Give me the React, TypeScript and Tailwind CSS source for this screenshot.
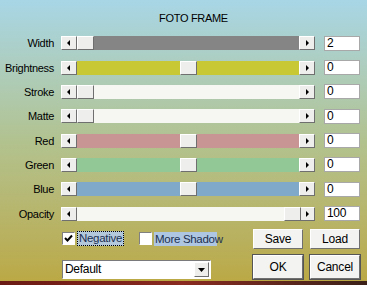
import React from 'react'

const sliders = [
  { label: 'Width', track: 'bg-[#858585]', thumb: 0, value: '2' },
  { label: 'Brightness', track: 'bg-[#c8c834]', thumb: 103, value: '0' },
  { label: 'Stroke', track: 'bg-[#f6f6f3]', thumb: 0, value: '0' },
  { label: 'Matte', track: 'bg-[#f6f6f3]', thumb: 0, value: '0' },
  { label: 'Red', track: 'bg-[#c89494]', thumb: 103, value: '0' },
  { label: 'Green', track: 'bg-[#92c896]', thumb: 103, value: '0' },
  { label: 'Blue', track: 'bg-[#80a8c8]', thumb: 103, value: '0' },
  { label: 'Opacity', track: 'bg-[#f6f6f3]', thumb: 207, value: '100' },
]

const raised = 'border border-t-white border-l-white border-b-[#6f6f6f] border-r-[#6f6f6f] bg-[#eeeeec]'
const sunken = 'border border-t-[#808080] border-l-[#808080] border-b-white border-r-white bg-white'

function Arrow({ dir }: { dir: 'left' | 'right' | 'down' }) {
  const pts = dir === 'left' ? '5,1 5,7 2,4' : dir === 'right' ? '3,1 3,7 6,4' : '1,3 8,3 4.5,7'
  return (
    <svg width="9" height="8" viewBox="0 0 9 8">
      <polygon points={pts} fill="#000" />
    </svg>
  )
}

function ScrollBar({ track, thumb }: { track: string; thumb: number }) {
  return (
    <div className="flex h-[14px] w-[254px]">
      <div className={`flex h-full w-[16px] items-center justify-center ${raised}`}>
        <Arrow dir="left" />
      </div>
      <div className={`relative h-full w-[222px] ${track}`}>
        <div className={`absolute top-0 h-full w-[17px] ${raised}`} style={{ left: thumb }} />
      </div>
      <div className={`flex h-full w-[16px] items-center justify-center ${raised}`}>
        <Arrow dir="right" />
      </div>
    </div>
  )
}

function Button({ label, tall }: { label: string; tall?: boolean }) {
  return (
    <div
      className={`flex items-center justify-center ${tall ? 'h-[24px] w-[50px] outline outline-1 outline-[#555]' : 'h-[20px] w-[50px]'} ${raised} bg-[#f3f3f1] text-[12px] tracking-[-0.2px] text-black`}
    >
      {label}
    </div>
  )
}

export default function App() {
  return (
    <main
      className="relative h-[285px] w-[367px] overflow-hidden bg-gradient-to-b from-[#a8d6e6] via-[#b2c28e] to-[#bba842] text-[11px] tracking-[-0.3px] text-black"
      style={{ fontFamily: '"Liberation Sans", Arial, sans-serif' }}
    >
      <div className="pt-[11px] pl-[159px] leading-[14px]">FOTO FRAME</div>

      <div className="mt-[6px] flex flex-col">
        {sliders.map(s => (
          <div key={s.label} className="flex h-[24.35px] items-center">
            <div className="w-[54px] whitespace-nowrap text-right leading-[14px]">{s.label}</div>
            <div className="ml-[7px]">
              <ScrollBar track={s.track} thumb={s.thumb} />
            </div>
            <div className="ml-[9px] flex h-[15px] w-[36px] items-center border border-[#a8a8a8] bg-white pl-[2px] text-[12px] leading-[13px]">
              {s.value}
            </div>
          </div>
        ))}
      </div>

      <div className="mt-[3px] flex items-start">
        <div className="ml-[62px] flex w-[149px] flex-col">
          <div className="flex h-[20px] items-center whitespace-nowrap text-[11.5px]">
            <div className={`flex h-[13px] w-[13px] shrink-0 items-center justify-center ${sunken}`}>
              <svg width="9" height="9" viewBox="0 0 9 9">
                <path d="M1 4 L3.5 6.5 L8 1.5" stroke="#000" strokeWidth="2" fill="none" />
              </svg>
            </div>
            <span className="ml-[2px] border border-dotted border-black bg-[#b4c8dc] px-[1px] leading-[13px] text-[#203050]">Negative</span>
            <div className={`ml-[15px] h-[13px] w-[13px] shrink-0 ${sunken}`} />
            <span className="ml-[2px] w-[63px] shrink-0 bg-[#aec6e2] px-[1px] leading-[14px] text-[#203050]">More Shadow</span>
          </div>
          <div className="mt-[11px] flex h-[19px] w-[149px] items-center border border-t-[#7a7a7a] border-l-[#7a7a7a] border-b-white border-r-white bg-white pl-[2px] text-[12px]">
            <span className="flex-1 leading-[13px]">Default</span>
            <div className={`mr-[1px] flex h-[15px] w-[15px] items-center justify-center ${raised}`}>
              <Arrow dir="down" />
            </div>
          </div>
        </div>
        <div className="ml-[42px] grid shrink-0 grid-cols-[50px_50px] gap-x-[7px] gap-y-[6px]">
          <Button label="Save" />
          <Button label="Load" />
          <Button label="OK" tall />
          <Button label="Cancel" tall />
        </div>
      </div>

      <div className="absolute bottom-0 left-0 h-[4px] w-full bg-gradient-to-r from-[#6a1a14] via-[#8a2a20] to-[#3a2018]" />
    </main>
  )
}
